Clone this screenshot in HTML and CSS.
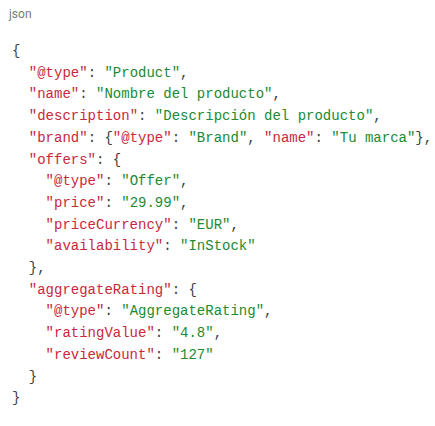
FILE: index.html
```html
<!DOCTYPE html>
<html>
<head>
<meta charset="utf-8">
<link rel="stylesheet" href="styles.css">
</head>
<body>
<div class="block">
<div class="lang">json</div>
<pre class="code"><span class="p">{</span>
  <span class="k">"@type"</span><span class="p">: </span><span class="s">"Product"</span><span class="p">,</span>
  <span class="k">"name"</span><span class="p">: </span><span class="s">"Nombre del producto"</span><span class="p">,</span>
  <span class="k">"description"</span><span class="p">: </span><span class="s">"Descripción del producto"</span><span class="p">,</span>
  <span class="k">"brand"</span><span class="p">: {</span><span class="k">"@type"</span><span class="p">: </span><span class="s">"Brand"</span><span class="p">, </span><span class="k">"name"</span><span class="p">: </span><span class="s">"Tu marca"</span><span class="p">},</span>
  <span class="k">"offers"</span><span class="p">: {</span>
    <span class="k">"@type"</span><span class="p">: </span><span class="s">"Offer"</span><span class="p">,</span>
    <span class="k">"price"</span><span class="p">: </span><span class="s">"29.99"</span><span class="p">,</span>
    <span class="k">"priceCurrency"</span><span class="p">: </span><span class="s">"EUR"</span><span class="p">,</span>
    <span class="k">"availability"</span><span class="p">: </span><span class="s">"InStock"</span>
  <span class="p">},</span>
  <span class="k">"aggregateRating"</span><span class="p">: {</span>
    <span class="k">"@type"</span><span class="p">: </span><span class="s">"AggregateRating"</span><span class="p">,</span>
    <span class="k">"ratingValue"</span><span class="p">: </span><span class="s">"4.8"</span><span class="p">,</span>
    <span class="k">"reviewCount"</span><span class="p">: </span><span class="s">"127"</span>
  <span class="p">}</span>
<span class="p">}</span></pre>
</div>
</body>
</html>
```
FILE: styles.css
```css
html, body {
  margin: 0;
  padding: 0;
  background: #ffffff;
}
.block {
  padding: 6px 0 0 0;
}
.lang {
  font-family: Roboto, "Liberation Sans", sans-serif;
  font-size: 12px;
  line-height: 16px;
  color: #7a7a7a;
  padding-left: 9px;
}
.code {
  margin: 0;
  padding: 19px 12px 0 12px;
  font-family: "Liberation Mono", monospace;
  font-size: 14px;
  line-height: 21.7px;
  color: #3a3f44;
  white-space: pre;
}
.k { color: #c8283b; }
.s { color: #218a32; }
.p { color: #3a3f44; }
```
